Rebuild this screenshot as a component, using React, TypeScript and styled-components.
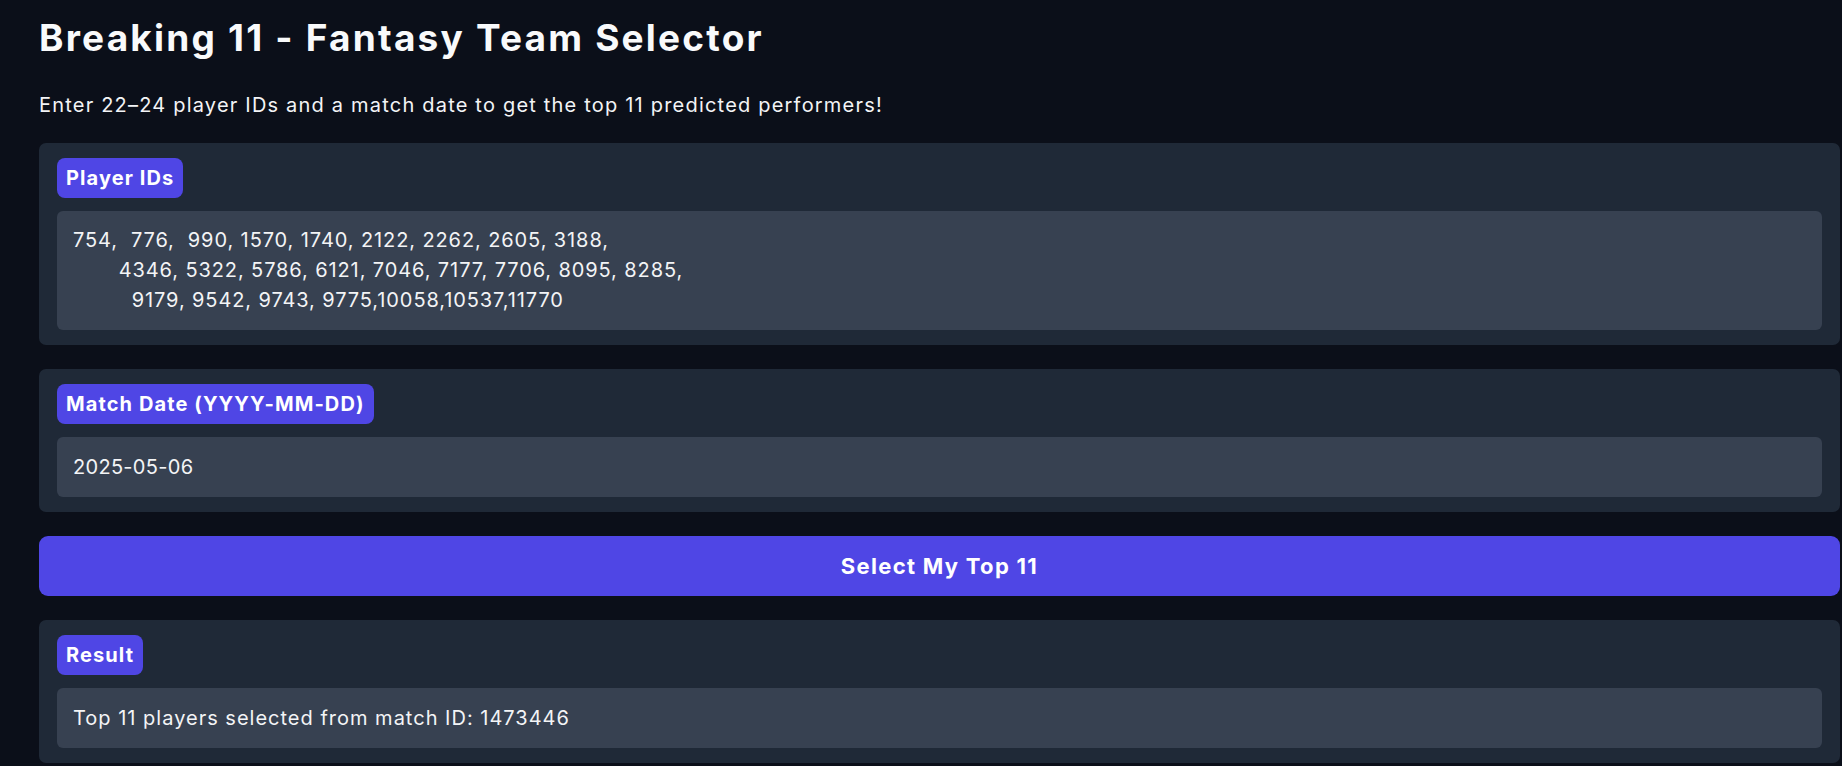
import styled, { createGlobalStyle } from 'styled-components';
import { useState } from 'react';

const GlobalStyle = createGlobalStyle`
  * {
    box-sizing: border-box;
  }
  body {
    margin: 0;
    background-color: #0b0f19;
    color: #f3f4f6;
    font-family: 'Inter', 'Noto Sans', sans-serif;
  }
`;

const initialIds =
  '754,  776,  990, 1570, 1740, 2122, 2262, 2605, 3188,\n' +
  '       4346, 5322, 5786, 6121, 7046, 7177, 7706, 8095, 8285,\n' +
  '         9179, 9542, 9743, 9775,10058,10537,11770';

const App = () => {
  const [playerIds, setPlayerIds] = useState(initialIds);
  const [matchDate, setMatchDate] = useState('2025-05-06');
  const [result, setResult] = useState('Top 11 players selected from match ID: 1473446');

  const handleSelect = () => {
    setResult('Top 11 players selected from match ID: 1473446');
  };

  return (
    <Page>
      <GlobalStyle />
      <Title>Breaking 11 - Fantasy Team Selector</Title>
      <Subtitle>Enter 22–24 player IDs and a match date to get the top 11 predicted performers!</Subtitle>
      <Stack>
        <Block>
          <Badge htmlFor="ids">Player IDs</Badge>
          <IdsArea
            id="ids"
            rows={3}
            value={playerIds}
            onChange={(e) => setPlayerIds(e.target.value)}
          />
        </Block>
        <Block>
          <Badge htmlFor="date">Match Date (YYYY-MM-DD)</Badge>
          <TextField
            id="date"
            type="text"
            $tracking={0.3}
            value={matchDate}
            onChange={(e) => setMatchDate(e.target.value)}
          />
        </Block>
        <PrimaryButton type="button" onClick={handleSelect}>
          Select My Top 11
        </PrimaryButton>
        <Block>
          <Badge htmlFor="result">Result</Badge>
          <TextField id="result" type="text" value={result} readOnly />
        </Block>
      </Stack>
    </Page>
  );
};

export default App;

const Page = styled.div`
  width: 1801px;
  margin-left: 39px;
  padding-top: 16px;
`;

const Title = styled.h1`
  margin: 0;
  font-size: 37px;
  font-weight: 700;
  letter-spacing: 2.2px;
  line-height: 44px;
  color: #f9fafb;
`;

const Subtitle = styled.p`
  margin: 31px 0 0;
  font-size: 20px;
  letter-spacing: 1.2px;
  line-height: 28px;
  color: #f3f4f6;
`;

const Stack = styled.div`
  display: flex;
  flex-direction: column;
  gap: 24px;
  margin-top: 24px;
`;

const Block = styled.div`
  display: flex;
  flex-direction: column;
  align-items: flex-start;
  gap: 13px;
  padding: 15px 18px;
  background-color: #1f2937;
  border-radius: 7px;
`;

const Badge = styled.label`
  display: inline-flex;
  align-items: center;
  height: 40px;
  padding: 0 9px;
  border-radius: 8px;
  background-color: #4f46e5;
  color: #ffffff;
  font-size: 20px;
  font-weight: 700;
  letter-spacing: 1.1px;
`;

const IdsArea = styled.textarea`
  all: unset;
  box-sizing: border-box;
  display: block;
  width: 100%;
  height: 119px;
  padding: 14px 16px;
  border-radius: 6px;
  background-color: #374151;
  color: #f3f4f6;
  font-family: 'Inter', 'Noto Sans', sans-serif;
  font-size: 20px;
  letter-spacing: 0.9px;
  line-height: 30px;
  white-space: pre;
  overflow: hidden;
  resize: none;
`;

const TextField = styled.input<{ $tracking?: number }>`
  all: unset;
  box-sizing: border-box;
  display: block;
  width: 100%;
  height: 60px;
  padding: 0 16px;
  border-radius: 6px;
  background-color: #374151;
  color: #f3f4f6;
  font-family: 'Inter', 'Noto Sans', sans-serif;
  font-size: 20px;
  letter-spacing: ${(p) => p.$tracking ?? 1}px;
`;

const PrimaryButton = styled.button`
  height: 60px;
  border: none;
  border-radius: 9px;
  background-color: #4f46e5;
  color: #ffffff;
  font-family: 'Inter', 'Noto Sans', sans-serif;
  font-size: 22px;
  font-weight: 700;
  letter-spacing: 1.3px;
  cursor: pointer;
`;
